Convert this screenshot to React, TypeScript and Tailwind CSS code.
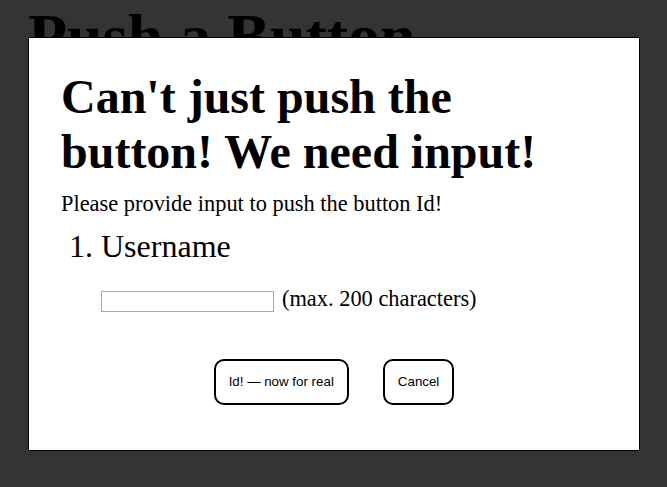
import React from "react";

export default function App() {
  const serif = { fontFamily: '"Liberation Serif", "Times New Roman", serif' };
  return (
    <div className="relative h-[487px] w-full overflow-hidden bg-[#343434]" style={serif}>
      <h1 className="m-0 px-[28px] text-[64px] font-bold leading-[74px] text-black">Push a Button</h1>
      <div className="absolute left-[28px] top-[37px] flex h-[414px] w-[612px] flex-col border border-black bg-white px-[32px] pt-[31px] text-black">
        <h2 className="m-0 text-[48px] font-bold leading-[55px]">
          Can't just push the button! We need input!
        </h2>
        <p className="mt-[12px] text-[22.4px] leading-[25px]">Please provide input to push the button Id!</p>
        <div className="mt-[12px] pl-[8px] text-[32px] leading-[36px]">1. Username</div>
        <div className="mt-[27px] flex items-center pl-[40px] text-[22.4px] leading-[25px]">
          <input
            type="text"
            className="h-[21px] w-[173px] border border-[#a9a9a9] bg-white outline-none"
          />
          <span className="ml-[8px] -mt-[6px]">(max. 200 characters)</span>
        </div>
        <div
          className="mt-[47px] flex justify-center gap-[34px] text-[13.333px]"
          style={{ fontFamily: '"Liberation Sans", Arial, sans-serif' }}
        >
          <button className="h-[46px] rounded-[10px] border-2 border-black bg-white px-[13px] text-black">
            Id! — now for real
          </button>
          <button className="h-[46px] rounded-[10px] border-2 border-black bg-white px-[13px] text-black">
            Cancel
          </button>
        </div>
      </div>
    </div>
  );
}
